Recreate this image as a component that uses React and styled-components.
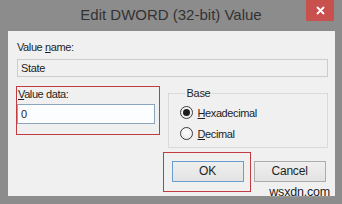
import React from 'react';
import styled, { createGlobalStyle } from 'styled-components';

const GlobalStyle = createGlobalStyle`
  html, body {
    margin: 0;
    padding: 0;
    background: #8c8c8c;
  }
  * {
    box-sizing: border-box;
  }
`;

const Window = styled.div`
  position: relative;
  width: 342px;
  height: 204px;
  background: #8c8c8c;
  font-family: "Liberation Sans", Arial, sans-serif;
  overflow: hidden;
  display: flex;
  flex-direction: column;
`;

const TitleBar = styled.div`
  height: 31px;
  display: grid;
  grid-template-columns: 1fr auto 1fr;
  align-items: start;
`;

const Title = styled.div`
  grid-column: 2;
  padding-top: 6px;
  font-size: 15px;
  line-height: 18px;
  color: #333333;
  white-space: nowrap;
`;

const CloseButton = styled.div`
  grid-column: 3;
  justify-self: end;
  margin-right: 8px;
  width: 28px;
  height: 21px;
  background: #c8504d;
  display: flex;
  align-items: center;
  justify-content: center;
`;

const Client = styled.div`
  margin: 0 7px 0 8px;
  height: 165px;
  background: #f0f0f0;
  padding: 9px 7px 0 9px;
  display: flex;
  flex-direction: column;
`;

const Label = styled.div`
  font-size: 11px;
  line-height: 14px;
  letter-spacing: -0.4px;
  color: #1e1e1e;
  padding-left: ${(props) => props.indent || 0}px;
  u {
    text-decoration-thickness: 1px;
    text-underline-offset: 1px;
  }
`;

const Field = styled.div`
  height: 18px;
  margin-top: 5px;
  width: ${(props) => props.width || '100%'};
  border: 1px solid ${(props) => (props.active ? '#8ba6bc' : '#cdcdcd')};
  background: ${(props) => (props.active ? '#fbfdfe' : '#f0f0f0')};
  font-size: 11px;
  line-height: 16px;
  letter-spacing: -0.3px;
  padding-left: 3px;
  color: #1e1e1e;
`;

const LowerRow = styled.div`
  display: flex;
  align-items: flex-start;
  margin-top: 9px;
  margin-left: -1px;
`;

const Highlight = styled.div`
  border: 1px solid #c23b40;
`;

const DataBox = styled(Highlight)`
  width: 144px;
  height: 49px;
  padding-top: 0;
  display: flex;
  flex-direction: column;
`;

const DataInput = styled(Field)`
  height: 20px;
  margin-top: 3px;
  line-height: 18px;
`;

const RightColumn = styled.div`
  margin-left: 3px;
  width: 166px;
  display: flex;
  flex-direction: column;
`;

const GroupBox = styled.fieldset`
  margin: 0 0 0 5px;
  padding: 2px 0 3px 11px;
  border: 1px solid #d9d9d9;
  min-width: 0;
`;

const Legend = styled.legend`
  margin-left: 5px;
  padding: 0 2px;
  font-size: 11px;
  line-height: 14px;
  letter-spacing: -0.3px;
  color: #1e1e1e;
`;

const RadioRow = styled.div`
  display: flex;
  align-items: center;
  height: 21px;
  gap: 5px;
  font-size: 11px;
  letter-spacing: -0.4px;
  color: #1e1e1e;
`;

const RadioCircle = styled.span`
  width: 13px;
  height: 13px;
  border-radius: 50%;
  border: 1px solid #3c3c3c;
  background: radial-gradient(circle at 50% 40%, #ffffff, #e6e6e6);
  display: flex;
  align-items: center;
  justify-content: center;
  &::after {
    content: '';
    width: 7px;
    height: 7px;
    border-radius: 50%;
    background: #1c1c1c;
    display: ${(props) => (props.checked ? 'block' : 'none')};
  }
`;

const ButtonRow = styled.div`
  display: flex;
  align-items: flex-start;
  margin-top: 4px;
  gap: 3px;
`;

const OkFrame = styled(Highlight)`
  padding: 8px 6px 9px 8px;
`;

const Button = styled.div`
  width: 72px;
  height: 21px;
  margin-top: ${(props) => props.offset || 0}px;
  border: 1px solid ${(props) => (props.primary ? '#6a9ccc' : '#acacac')};
  background: linear-gradient(#efefef, #e3e3e3);
  font-size: 12px;
  line-height: 19px;
  text-align: center;
  color: #1e1e1e;
  letter-spacing: -0.2px;
`;

const Watermark = styled.div`
  position: absolute;
  right: 12px;
  bottom: 5px;
  font-size: 12.5px;
  line-height: 14px;
  color: #1a1a1a;
  letter-spacing: -0.2px;
  text-shadow: 0 0 2px #ffffff;
`;

const App = () => {
  return (
    <Window>
      <GlobalStyle />
      <TitleBar>
        <Title>Edit DWORD (32-bit) Value</Title>
        <CloseButton>
          <svg width="9" height="9" viewBox="0 0 9 9">
            <path d="M1 1 L8 8 M8 1 L1 8" stroke="#ffffff" strokeWidth="1.8" />
          </svg>
        </CloseButton>
      </TitleBar>
      <Client>
        <Label>
          Value <u>n</u>ame:
        </Label>
        <Field>State</Field>
        <LowerRow>
          <DataBox>
            <Label indent={1}>
              <u>V</u>alue data:
            </Label>
            <DataInput active width="138px">0</DataInput>
          </DataBox>
          <RightColumn>
            <GroupBox>
              <Legend>Base</Legend>
              <RadioRow>
                <RadioCircle checked />
                <span>
                  <u>H</u>exadecimal
                </span>
              </RadioRow>
              <RadioRow>
                <RadioCircle />
                <span>
                  <u>D</u>ecimal
                </span>
              </RadioRow>
            </GroupBox>
            <ButtonRow>
              <OkFrame>
                <Button primary>OK</Button>
              </OkFrame>
              <Button offset={9}>Cancel</Button>
            </ButtonRow>
          </RightColumn>
        </LowerRow>
      </Client>
      <Watermark>wsxdn.com</Watermark>
    </Window>
  );
};

export default App;
